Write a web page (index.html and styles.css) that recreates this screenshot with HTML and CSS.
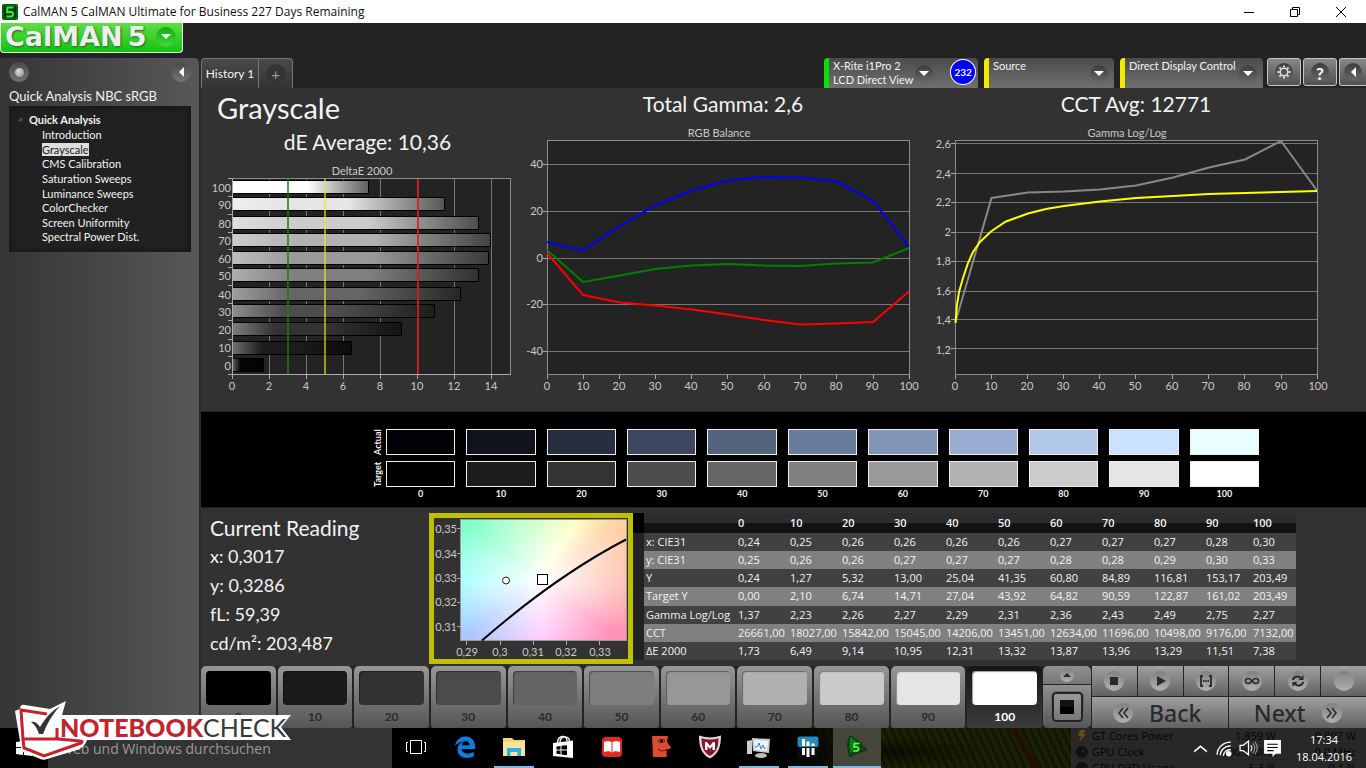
FILE: index.html
```html
<!DOCTYPE html>
<html lang="en">
<head>
<meta charset="utf-8">
<title>CalMAN 5 CalMAN Ultimate for Business 227 Days Remaining</title>
<link rel="stylesheet" href="styles.css">
</head>
<body>
<header class="titlebar">
  <svg class="app-icon" viewBox="0 0 16 16" aria-hidden="true"><rect width="16" height="16" rx="2" fill="#063a06"/><rect x="1" y="1" width="14" height="14" rx="2" fill="none" stroke="#0b8a12"/><path d="M11.5 3.5H5.5L5 8h4.5c2 0 2 4.500-.5 4.500H4.500" fill="none" stroke="#25f53a" stroke-width="2"/></svg>
  <span class="title">CalMAN 5 CalMAN Ultimate for Business 227 Days Remaining</span>
  <div class="win-buttons">
    <button aria-label="Minimize"><svg viewBox="0 0 12 12"><path d="M1 6.500h10"/></svg></button>
    <button aria-label="Restore"><svg viewBox="0 0 12 12"><path d="M1.500 3.500h7v7h-7zM3.500 3.500v-2h7v7h-2"/></svg></button>
    <button aria-label="Close"><svg viewBox="0 0 12 12"><path d="M1 1l10 10M11 1L1 11"/></svg></button>
  </div>
</header>

<div class="brandbar">
  <button class="brand"><span class="brand-name">CalMAN</span><span class="brand-num">5</span><span class="knob green"><i class="down"></i></span></button>
</div>

<div class="workspace">
  <aside class="sidebar">
    <div class="side-top">
      <button class="knob big" aria-label="Options"><i class="ball"></i></button>
      <button class="knob big" aria-label="Collapse"><i class="left"></i></button>
    </div>
    <h2 class="side-title">Quick Analysis NBC sRGB</h2>
    <nav class="tree">
      <div class="tree-root"><svg viewBox="0 0 6 6" aria-hidden="true"><path d="M5 0v5H0z" fill="#555"/></svg>Quick Analysis</div>
      <ul>
        <li><a href="#">Introduction</a></li>
        <li><a href="#" class="current">Grayscale</a></li>
        <li><a href="#">CMS Calibration</a></li>
        <li><a href="#">Saturation Sweeps</a></li>
        <li><a href="#">Luminance Sweeps</a></li>
        <li><a href="#">ColorChecker</a></li>
        <li><a href="#">Screen Uniformity</a></li>
        <li><a href="#">Spectral Power Dist.</a></li>
      </ul>
    </nav>
  </aside>

  <main class="main">
    <div class="toolbar">
      <div class="tabs">
        <button class="tab">History 1</button>
        <button class="tab add" aria-label="Add tab"><span>+</span></button>
      </div>
      <div class="devices">
        <button class="device meter"><span class="device-name">X-Rite i1Pro 2<br>LCD Direct View</span><span class="knob"><i class="down"></i></span><span class="count">232</span></button>
        <button class="device source"><span class="device-name">Source</span><span class="knob"><i class="down"></i></span></button>
        <button class="device display"><span class="device-name">Direct Display Control</span><span class="knob"><i class="down"></i></span></button>
        <div class="tools">
          <button class="tool" aria-label="Settings"><span class="knob"><svg viewBox="0 0 14 14" fill="none" stroke="#ddd"><circle cx="7" cy="7" r="3.800" stroke-width="1.600"/><path d="M7 .5v2M7 11.500v2M.5 7h2M11.500 7h2M2.400 2.400l1.500 1.500M10.100 10.100l1.500 1.500M2.400 11.600l1.500-1.500M10.100 3.900l1.500-1.500" stroke-width="2"/></svg></span></button>
          <button class="tool help" aria-label="Help"><span class="knob">?</span></button>
          <button class="tool cut" aria-label="Collapse panel"><span class="knob"><i class="left"></i></span></button>
        </div>
      </div>
    </div>

    <section class="charts">
      <div class="chart">
        <h1>Grayscale</h1>
        <h2>dE Average: 10,36</h2>
        <svg viewBox="201 161 324 250" role="img" aria-label="DeltaE 2000">
          <defs><linearGradient id="shade"><stop offset="0" stop-color="#fff" stop-opacity=".36"/><stop offset=".25" stop-color="#fff" stop-opacity="0"/><stop offset=".55" stop-color="#000" stop-opacity="0"/><stop offset="1" stop-color="#000" stop-opacity=".62"/></linearGradient></defs>
          <text x="362" y="175" class="mid">DeltaE 2000</text>
          <rect x="232.500" y="178.500" width="278" height="196" class="plot"/>
          <path class="grid" d="M269.500 179v195M306.500 179v195M343.500 179v195M380.500 179v195M417.500 179v195M454.500 179v195M491.500 179v195"/>
          <g stroke="#000">
            <path fill="#fff" d="M232.500 180.500h136v13h-136z"/><path fill="#e5e5e5" d="M232.500 197.500h212v13h-212z"/>
            <path fill="#ccc" d="M232.500 216.500h246v13h-246z"/><path fill="#b2b2b2" d="M232.500 233.500h258v13h-258z"/>
            <path fill="#999" d="M232.500 251.500h256v13h-256z"/><path fill="#808080" d="M232.500 268.500h246v13h-246z"/>
            <path fill="#666" d="M232.500 287.500h228v13h-228z"/><path fill="#4c4c4c" d="M232.500 304.500h202v13h-202z"/>
            <path fill="#333" d="M232.500 322.500h169v13h-169z"/><path fill="#1c1c1c" d="M232.500 341.500h119v13h-119z"/>
            <path fill="#050505" d="M232.500 358.500h31v13h-31z"/>
          </g>
          <g fill="url(#shade)">
            <path d="M233 181h135v12H233z"/><path d="M233 198h211v12H233z"/><path d="M233 217h245v12H233z"/><path d="M233 234h257v12H233z"/><path d="M233 252h255v12H233z"/><path d="M233 269h245v12H233z"/><path d="M233 288h227v12H233z"/><path d="M233 305h201v12H233z"/><path d="M233 323h168v12H233z"/><path d="M233 342h118v12H233z"/><path d="M233 359h30v12H233z"/>
          </g>
          <path class="frame" d="M232.500 178.500v196h278"/>
          <path class="tick" d="M228 178.500h4M228 196.500h4M228 214.500h4M228 232.500h4M228 249.500h4M228 267.500h4M228 285.500h4M228 303.500h4M228 320.500h4M228 339.500h4M228 356.500h4M228 374.500h4M232.500 375v4M269.500 375v4M306.500 375v4M343.500 375v4M380.500 375v4M417.500 375v4M454.500 375v4M491.500 375v4"/>
          <path d="M288 179v195" stroke="#1a7a1a" stroke-width="2" opacity=".75"/><path d="M325 179v195" stroke="#f0e820" stroke-width="2" opacity=".6"/><path d="M418 179v195" stroke="#e01818" stroke-width="2" opacity=".8"/>
          <g class="end"><text x="231" y="192">100</text><text x="231" y="209">90</text><text x="231" y="228">80</text><text x="231" y="245">70</text><text x="231" y="263">60</text><text x="231" y="280">50</text><text x="231" y="299">40</text><text x="231" y="316">30</text><text x="231" y="334">20</text><text x="231" y="352">10</text><text x="231" y="370">0</text></g>
          <g class="mid"><text x="232" y="390">0</text><text x="269" y="390">2</text><text x="306" y="390">4</text><text x="343" y="390">6</text><text x="380" y="390">8</text><text x="417" y="390">10</text><text x="454" y="390">12</text><text x="491" y="390">14</text></g>
        </svg>
      </div>
      <div class="chart">
        <h2>Total Gamma: 2,6</h2>
        <svg viewBox="525 123 400 288" role="img" aria-label="RGB Balance">
          <text x="719" y="137" class="mid">RGB Balance</text>
          <rect x="547.500" y="140.500" width="362" height="234" class="plot"/>
          <path class="grid" d="M547 164.500h362M547 211.500h362M547 258.500h362M547 304.500h362M547 351.500h362"/>
          <path class="tick" d="M543 164.500h4M543 211.500h4M543 258.500h4M543 304.500h4M543 351.500h4M547.500 375v4M583.500 375v4M619.500 375v4M655.500 375v4M691.500 375v4M727.500 375v4M764.500 375v4M800.500 375v4M836.500 375v4M873.500 375v4M909.500 375v4"/>
          <polyline class="line" stroke="#00f" points="547,242 583,250.500 620,226 655,205.500 692,190.500 728,180.500 764,177 800,177.500 837,181.500 873,200.500 909,247"/>
          <polyline class="line" stroke="#008000" points="547,250 583,282 620,275.500 655,269 692,265.500 728,264 764,265.500 800,266 837,263.500 873,262.500 909,248"/>
          <polyline class="line" stroke="#f00" points="547,253 583,295 620,302.500 655,305.500 692,309.500 728,314.500 764,320 800,324.500 837,323.500 873,322 909,291.500"/>
          <g class="end"><text x="543" y="168">40</text><text x="543" y="215">20</text><text x="543" y="262">0</text><text x="543" y="308">-20</text><text x="543" y="355">-40</text></g>
          <g class="mid"><text x="547" y="390">0</text><text x="583" y="390">10</text><text x="619" y="390">20</text><text x="655" y="390">30</text><text x="691" y="390">40</text><text x="727" y="390">50</text><text x="764" y="390">60</text><text x="800" y="390">70</text><text x="836" y="390">80</text><text x="872" y="390">90</text><text x="909" y="390">100</text></g>
        </svg>
      </div>
      <div class="chart">
        <h2>CCT Avg: 12771</h2>
        <svg viewBox="925 123 441 288" role="img" aria-label="Gamma Log/Log">
          <text x="1127" y="137" class="mid">Gamma Log/Log</text>
          <rect x="955.500" y="140.500" width="362" height="234" class="plot"/>
          <path class="grid" d="M955 143.500h362M955 173.500h362M955 202.500h362M955 232.500h362M955 261.500h362M955 291.500h362M955 319.500h362M955 348.500h362"/>
          <path class="tick" d="M951 143.500h4M951 173.500h4M951 202.500h4M951 232.500h4M951 261.500h4M951 291.500h4M951 319.500h4M951 348.500h4M955.500 375v4M991.500 375v4M1027.500 375v4M1063.500 375v4M1099.500 375v4M1135.500 375v4M1172.500 375v4M1208.500 375v4M1244.500 375v4M1281.500 375v4M1317.500 375v4"/>
          <polyline class="line" stroke="#888" points="955.500,322 991.500,198 1028,192.500 1064,191.500 1100,189.500 1136,185.500 1173,177.500 1209,167.500 1245,159.500 1281,141 1317,190.500"/>
          <polyline class="line" stroke="#ff0" points="955.500,323 957,305 959,292 963,278 968,263 973,252 980,242 991,231.500 1006,221.500 1028,213.500 1046,209 1064,206 1100,201.500 1136,198 1173,196 1209,194 1245,193 1281,192 1317,191"/>
          <g class="end"><text x="951" y="148">2,6</text><text x="951" y="178">2,4</text><text x="951" y="206">2,2</text><text x="951" y="236">2</text><text x="951" y="265">1,8</text><text x="951" y="295">1,6</text><text x="951" y="324">1,4</text><text x="951" y="354">1,2</text></g>
          <g class="mid"><text x="955" y="390">0</text><text x="991" y="390">10</text><text x="1027" y="390">20</text><text x="1063" y="390">30</text><text x="1099" y="390">40</text><text x="1135" y="390">50</text><text x="1172" y="390">60</text><text x="1208" y="390">70</text><text x="1244" y="390">80</text><text x="1281" y="390">90</text><text x="1318" y="390">100</text></g>
        </svg>
      </div>
    </section>

    <section class="swatches">
      <div class="swatch-names"><span>Actual</span><span>Target</span></div>
      <div class="swatch"><i style="background:#020208"></i><i style="background:#000"></i><b>0</b></div>
      <div class="swatch"><i style="background:#0e131d"></i><i style="background:#1c1c1c"></i><b>10</b></div>
      <div class="swatch"><i style="background:#262e3f"></i><i style="background:#333"></i><b>20</b></div>
      <div class="swatch"><i style="background:#3d4860"></i><i style="background:#4c4c4c"></i><b>30</b></div>
      <div class="swatch"><i style="background:#55647d"></i><i style="background:#666"></i><b>40</b></div>
      <div class="swatch"><i style="background:#6a7c9c"></i><i style="background:#808080"></i><b>50</b></div>
      <div class="swatch"><i style="background:#8095b7"></i><i style="background:#999"></i><b>60</b></div>
      <div class="swatch"><i style="background:#98add1"></i><i style="background:#b2b2b2"></i><b>70</b></div>
      <div class="swatch"><i style="background:#b1c7ea"></i><i style="background:#ccc"></i><b>80</b></div>
      <div class="swatch"><i style="background:#cae1ff"></i><i style="background:#e5e5e5"></i><b>90</b></div>
      <div class="swatch"><i style="background:#e9ffff"></i><i style="background:#fff"></i><b>100</b></div>
    </section>

    <section class="readings">
      <div class="current-reading">
        <h2>Current Reading</h2>
        <p>x: 0,3017</p><p>y: 0,3286</p><p>fL: 59,39</p><p>cd/m²: 203,487</p>
      </div>
      <svg class="cie" viewBox="434 518 194 141" role="img" aria-label="CIE chromaticity">
        <rect x="460.500" y="519.500" width="166" height="121" fill="none" stroke="#999"/>
        <path d="M482 640.500Q556 576 626 539.500" fill="none" stroke="#000" stroke-width="2"/>
        <circle cx="506" cy="580.500" r="3.500" fill="#fff" stroke="#222"/><rect x="537.500" y="574.500" width="10" height="10" fill="#fff" stroke="#000"/>
        <path class="tick" d="M457 528.500h3M457 553.500h3M457 578.500h3M457 602.500h3M457 626.500h3M466.500 641v4M500.500 641v4M533.500 641v4M566.500 641v4M599.500 641v4"/>
        <g class="end"><text x="457" y="533">0,35</text><text x="457" y="558">0,34</text><text x="457" y="582">0,33</text><text x="457" y="606">0,32</text><text x="457" y="631">0,31</text></g>
        <g class="mid"><text x="467" y="656">0,29</text><text x="500" y="656">0,3</text><text x="533" y="656">0,31</text><text x="566" y="656">0,32</text><text x="600" y="656">0,33</text></g>
      </svg>
      <table class="data">
        <thead><tr><td class="grip"></td><td></td><th>0</th><th>10</th><th>20</th><th>30</th><th>40</th><th>50</th><th>60</th><th>70</th><th>80</th><th>90</th><th>100</th></tr></thead>
        <tbody>
        <tr><td class="grip"></td><th>x: CIE31</th><td>0,24</td><td>0,25</td><td>0,26</td><td>0,26</td><td>0,26</td><td>0,26</td><td>0,27</td><td>0,27</td><td>0,27</td><td>0,28</td><td>0,30</td></tr>
        <tr><td class="grip"></td><th>y: CIE31</th><td>0,25</td><td>0,26</td><td>0,26</td><td>0,27</td><td>0,27</td><td>0,27</td><td>0,28</td><td>0,28</td><td>0,29</td><td>0,30</td><td>0,33</td></tr>
        <tr><td class="grip"></td><th>Y</th><td>0,24</td><td>1,27</td><td>5,32</td><td>13,00</td><td>25,04</td><td>41,35</td><td>60,80</td><td>84,89</td><td>116,81</td><td>153,17</td><td>203,49</td></tr>
        <tr><td class="grip"></td><th>Target Y</th><td>0,00</td><td>2,10</td><td>6,74</td><td>14,71</td><td>27,04</td><td>43,92</td><td>64,82</td><td>90,59</td><td>122,87</td><td>161,02</td><td>203,49</td></tr>
        <tr><td class="grip"></td><th>Gamma Log/Log</th><td>1,37</td><td>2,23</td><td>2,26</td><td>2,27</td><td>2,29</td><td>2,31</td><td>2,36</td><td>2,43</td><td>2,49</td><td>2,75</td><td>2,27</td></tr>
        <tr><td class="grip"></td><th>CCT</th><td>26661,00</td><td>18027,00</td><td>15842,00</td><td>15045,00</td><td>14206,00</td><td>13451,00</td><td>12634,00</td><td>11696,00</td><td>10498,00</td><td>9176,00</td><td>7132,00</td></tr>
        <tr><td class="grip"></td><th>ΔE 2000</th><td>1,73</td><td>6,49</td><td>9,14</td><td>10,95</td><td>12,31</td><td>13,32</td><td>13,87</td><td>13,96</td><td>13,29</td><td>11,51</td><td>7,38</td></tr>
        </tbody>
      </table>
    </section>

    <section class="controls">
      <div class="levels">
        <button><i style="background:#000"></i>0</button>
        <button><i style="background:#1b1b1b"></i>10</button>
        <button><i style="background:#323232"></i>20</button>
        <button><i style="background:#4b4b4b"></i>30</button>
        <button><i style="background:#646464"></i>40</button>
        <button><i style="background:#7e7e7e"></i>50</button>
        <button><i style="background:#979797"></i>60</button>
        <button><i style="background:#b0b0b0"></i>70</button>
        <button><i style="background:#cacaca"></i>80</button>
        <button><i style="background:#e5e5e5"></i>90</button>
        <button class="selected"><i style="background:#fff"></i>100</button>
      </div>
      <div class="pattern">
        <button class="up" aria-label="Show patterns"><span class="knob pale"><svg viewBox="0 0 10 10"><path d="M1 7l4-4 4 4z" fill="#2a2a2a"/></svg></span></button>
        <button class="window" aria-label="Pattern window"><i></i></button>
      </div>
      <div class="transport">
        <button aria-label="Stop"><span class="knob pale"><svg viewBox="0 0 16 16"><path d="M4 4h8v8H4z" fill="#2a2a2a"/></svg></span></button>
        <button aria-label="Play"><span class="knob pale"><svg viewBox="0 0 16 16"><path d="M5 3l9 5-9 5z" fill="#2a2a2a"/></svg></span></button>
        <button aria-label="Read series"><span class="knob pale"><svg viewBox="0 0 16 16" fill="none" stroke="#2a2a2a" stroke-width="1.800"><path d="M5 3H3v10h2M11 3h2v10h-2M5 8h1.500M7.300 8h1.400M9.500 8H11"/></svg></span></button>
        <button aria-label="Read continuously"><span class="knob pale"><svg viewBox="0 0 16 16" fill="none" stroke="#2a2a2a" stroke-width="1.600"><path d="M8 8C6 5 1.500 4.500 1.500 8S6 11 8 8s6.500-3.500 6.500 0S10 11 8 8z"/></svg></span></button>
        <button aria-label="Refresh"><span class="knob pale"><svg viewBox="0 0 16 16" fill="none" stroke="#2a2a2a" stroke-width="2"><path d="M3 7c0-3 5-5 8-2M13 9c0 3-5 5-8 2"/><path d="M13.500 2v5h-5zM2.500 14V9h5z" fill="#2a2a2a" stroke="none"/></svg></span></button>
        <button aria-label="Record"><span class="knob pale"></span></button>
        <button class="nav-btn"><span class="knob pale"><svg viewBox="0 0 16 16" fill="none" stroke="#2a2a2a" stroke-width="1.500"><path d="M8 3L4 8l4 5M13 3L9 8l4 5"/></svg></span>Back</button>
        <button class="nav-btn next">Next<span class="knob pale"><svg viewBox="0 0 16 16" fill="none" stroke="#2a2a2a" stroke-width="1.500"><path d="M3 3l4 5-4 5M8 3l4 5-4 5"/></svg></span></button>
      </div>
    </section>
  </main>
</div>

<footer class="taskbar">
  <div class="wallpaper"></div>
  <div class="sensor">
    <div><svg viewBox="0 0 12 12"><path d="M4 0h6L7 4h3L3 12l2-6H2z" fill="#6b4a10"/></svg><span>GT Cores Power</span><span>1.859 W</span><span>0.897 W</span></div>
    <div><svg viewBox="0 0 12 12"><circle cx="6" cy="6" r="6" fill="#111"/><path d="M6 6l3-3" stroke="#533"/></svg><span>GPU Clock</span><span>300.0 MHz</span><span>0.0 MHz</span></div>
    <div><svg viewBox="0 0 12 12"><circle cx="6" cy="6" r="6" fill="#111"/></svg><span>GPU D3D Usage</span><span>5.3 %</span><span>0.1 %</span></div>
  </div>
  <button class="start" aria-label="Start"><svg viewBox="0 0 16 16"><path d="M0 2l7-1v6H0zM8 1l8-1v7H8zM0 8h7v7l-7-1zM8 8h8v8l-8-1z" fill="#fff"/></svg></button>
  <input class="search" type="text" aria-label="Search" placeholder="Web und Windows durchsuchen">
  <nav class="apps">
    <button aria-label="Task view"><svg viewBox="0 0 24 24" fill="none" stroke="#fff"><path d="M6.500 5.500h11v13h-11zM4 7.500H2.500v9H4M20 7.500h1.500v9H20"/></svg></button>
    <button aria-label="Edge"><svg viewBox="0 0 24 24"><path d="M2 11C3 4.500 7.500 1.500 12.500 1.500c6 0 9.500 4.500 9.500 9.500v3H8.500c.3 3 3 4.500 6.500 4.500 2.300 0 4.200-.6 5.800-1.500v4.200c-2 1-4.300 1.600-7 1.600C8 22.800 4.500 19 4.500 14.700c0-4 2.500-7 6-8.200C6.500 7 4 8.500 2 11zM8.700 10.300h7.800c0-2.500-1.300-4.300-3.800-4.300-2.200 0-3.700 1.800-4 4.300z" fill="#0b7fe0"/></svg></button>
    <button class="running" aria-label="Explorer"><svg viewBox="0 0 24 24"><path d="M1 3h9l2 2h11v16H1z" fill="#f7d271"/><path d="M1 7h22v14H1z" fill="#fbe399"/><path d="M5 13h14v8h-3.500v-4h-7v4H5z" fill="#22b4ea"/></svg></button>
    <button aria-label="Store"><svg viewBox="0 0 24 24"><path d="M2 8l20-2.500V23L2 21z" fill="#fff"/><path d="M6.500 8c0-8 9.500-8.500 9.500-2M9 7.500c0-7 9-7.500 9.500-1.500" fill="none" stroke="#fff" stroke-width="1.400"/><path d="M5.500 11.500l4-.5v3.500h-4zM10.500 10.800l5.500-.6v4.300h-5.500zM5.500 15.500h4v3.700l-4-.5zM10.500 15.500H16v4.700l-5.500-.7z" fill="#000"/></svg></button>
    <button aria-label="Reader"><svg viewBox="0 0 24 24"><rect x="2" y="2" width="20" height="20" rx="4" fill="#de2a23"/><path d="M4 7c3-1.200 6-1 8 .5 2-1.500 5-1.700 8-.5v10c-3-1-6-1-8 .5-2-1.500-5-1.500-8-.5z" fill="#fff"/><path d="M12 7.500V17" stroke="#de2a23"/></svg></button>
    <button aria-label="Face"><svg viewBox="0 0 24 24"><path d="M3 1h16l-1 6 4.500 6-4.500 1.500V22H4z" fill="#e1482f"/><path d="M9 6c2-2 5-2 7 0-2 2-5 2-7 0z" fill="#a78" stroke="#222"/><circle cx="12.500" cy="6" r="1.500" fill="#111"/><path d="M9 14c3 2.500 6 2 9 .5M18 15v7" fill="none" stroke="#40100a"/></svg></button>
    <button aria-label="McAfee"><svg viewBox="0 0 24 24"><path d="M12 2.500q5 0 11-2c0 10-2 18-11 23C3 19 1 11 1 .5q6 2 11 2z" fill="#ddd"/><path d="M12 4.500q4 0 8.500-1.300c0 8-1.500 13.500-8.500 17.800C5 17 3.500 11.500 3.500 3.200Q8 4.500 12 4.500z" fill="#8c1528"/><path d="M7 15V7h2l3 4 3-4h2v8h-2.500v-4L12 14l-2.500-3v4z" fill="#fff"/></svg></button>
    <button class="running" aria-label="Monitor"><svg viewBox="0 0 24 24"><path d="M0 6l5-1v14H0zM5 3l18 1-1 14-16-2z" fill="#ccc"/><path d="M7 5l14 1-1 10-12-1.500z" fill="#eaf4ff"/><path d="M8 12h2l2-4 2 6 2-4 1 3h2" fill="none" stroke="#3184c9"/><ellipse cx="14" cy="20.500" rx="6" ry="2.500" fill="#bbb"/></svg></button>
    <button class="running" aria-label="Hardware info"><svg viewBox="0 0 24 24"><rect x="1.500" y="1.500" width="21" height="10.500" rx="2" fill="#2688bd"/><path d="M1.500 12h21v9q0 2-2 2h-17q-2 0-2-2z" fill="#090d10"/><path d="M7.500 4v7M7.500 13v7M12 6.500v4.500M12 13v9M17 8.500V11M17 13v7" stroke="#fff" stroke-width="3"/></svg></button>
    <button class="running active" aria-label="CalMAN"><svg viewBox="0 0 24 24"><path d="M5 1c5 2 13 9 17 14-6 1-12 4-17 7C2 14 2 6 5 1z" fill="#0a4a0c" stroke="#0b2f0b"/><path d="M5 2c3 1 7 5 9 7l-9 9z" fill="#0d7d12"/><path d="M14.500 8.500H9.500L9 12h3c2.500 0 2 4-1 4H8" fill="none" stroke="#5dff4c" stroke-width="1.700"/></svg></button>
  </nav>
  <div class="tray">
    <svg viewBox="0 0 18 18" fill="none" stroke="#fff" stroke-width="1.500"><path d="M3 12l6-5 6 5"/></svg>
    <svg viewBox="0 0 18 18" fill="none" stroke="#fff" stroke-width="1.300"><path d="M2 15C2 8 8 3 15 3M5 15.500c0-5 4-9 10-9M8 16c0-3.500 3-6 7-6"/><circle cx="13" cy="14" r="2" fill="#fff"/></svg>
    <svg viewBox="0 0 18 18" fill="none" stroke="#fff" stroke-width="1.200"><path d="M1 6h3l5-4v13l-5-4H1zM11 6c1.500 1.500 1.500 4 0 5.500"/><path d="M13 4c2.500 3 2.500 6.500 0 9.500M15 2.500c3 4 3 8 0 12" stroke="#888"/></svg>
    <svg viewBox="0 0 18 18"><path d="M1 1h16v13h-5l-3 3v-3H1z" fill="#fff"/><path d="M4 5h10M4 8h10M4 11h6" stroke="#000"/></svg>
  </div>
  <div class="clock"><span>17:34</span><span>18.04.2016</span></div>

  <div class="watermark">
    <svg viewBox="0 0 278 62" aria-hidden="true">
      <path d="M5 8Q5 3 10 4L35 8 51 0 47 14H276L266 26 276 39H72Q70 46 62 49L32 58Q28 60 23 57L8 51Q6 49 6 46L0 10z" fill="#fff"/>
      <path d="M42 27V38H8L6 9l26 4" fill="none" stroke="#c9202a" stroke-width="3"/>
      <path d="M8 38l1 9 20 8 37-13c2-1 1-2-1-2l-22-2" fill="none" stroke="#c9202a" stroke-width="3"/>
      <path d="M16 21q5-1 9 5Q33 12 45 5 34 17 28 33h-4Q21 24 16 21z" fill="#333"/>
    </svg>
    <div class="watermark-text"><b>NOTEBOOK</b><span>CHECK</span></div>
  </div>
</footer>
</body>
</html>
```
FILE: styles.css
```css
* { box-sizing: border-box; }
html, body { height: 100%; }
body { margin: 0; display: flex; flex-direction: column; min-height: 100vh; overflow: hidden; background: #232323; color: #f2f2f2; font-family: Lato, "Open Sans", sans-serif; font-size: 13px; }
button { margin: 0; padding: 0; border: 0; background: none; color: inherit; font: inherit; }
h1, h2, p, ul { margin: 0; padding: 0; font-weight: normal; }
ul { list-style: none; }
a { color: inherit; text-decoration: none; }
svg { display: block; }

.titlebar { flex: none; display: flex; align-items: center; height: 23px; padding-left: 2px; background: #fff; color: #111; font-family: "Open Sans", sans-serif; font-size: 12px; }
.app-icon { width: 16px; height: 16px; margin-right: 5px; }
.title { flex: 1; }
.win-buttons { display: flex; margin-right: 2px; }
.win-buttons button { width: 46px; height: 22px; display: grid; place-items: center; }
.win-buttons svg { width: 12px; height: 12px; fill: none; stroke: #000; }

.brandbar { flex: none; height: 35px; }
.brand { display: flex; align-items: center; width: 183px; height: 30px; padding: 0 6px 2px 4px; border: 1px solid #e4f8e0; border-top: 0; border-radius: 0 0 4px 4px; background: linear-gradient(#62dc45, #12c312); font: bold 27px/27px "DejaVu Sans", sans-serif; color: #eee; text-shadow: 1px 1px 2px #27632a; }
.brand-num { flex: 1; margin-left: 5px; text-align: left; }

.knob { flex: none; display: grid; place-items: center; width: 18px; height: 18px; border-radius: 50%; background: linear-gradient(#3c3c3c, #686868); }
.knob.big { width: 20px; height: 20px; background: linear-gradient(#4a4a4a, #737373); }
.knob.green { width: 20px; height: 20px; background: linear-gradient(#0fae12, #44d83f); }
.knob.pale { width: 20px; height: 20px; background: linear-gradient(#808080, #b0b0b0); }
.down { border: 5px solid transparent; border-top-color: #fff; border-bottom: 0; }
.left { border: 5px solid transparent; border-right-color: #fff; border-left: 0; }
.ball { width: 9px; height: 9px; border-radius: 50%; background: radial-gradient(circle at 40% 35%, #ddd, #8a8a8a); }

.workspace { flex: 1; display: flex; min-height: 0; }
.sidebar { flex: none; width: 201px; padding: 4px 8px 0 9px; border-right: 2px solid #2b2b2b; border-radius: 0 6px 0 0; background: linear-gradient(90deg, #353535, #585858); }
.side-top { display: flex; justify-content: space-between; }
.side-title { height: 24px; font-size: 13px; line-height: 28px; }
.tree { height: 146px; padding: 5px 0 7px 9px; background: #212121; border-top: 1px solid #191919; box-shadow: inset 0 0 6px #111; }
.tree-root { display: flex; align-items: center; gap: 6px; height: 14px; font-size: 11px; font-weight: bold; }
.tree-root svg { width: 5px; height: 5px; }
.tree ul { display: grid; grid-auto-rows: 1fr; height: 117px; margin-top: 2px; padding-left: 24px; font-size: 11px; line-height: 14px; }
.tree a.current { background: #ddd; color: #222; }

.main { flex: 1; min-width: 0; display: flex; flex-direction: column; background: #323232; }
.toolbar { flex: none; display: flex; justify-content: space-between; height: 30px; background: #232323; }
.tabs { display: flex; }
.tab { width: 58px; border: solid #777; border-width: 1px 1px 0 1px; border-radius: 4px 0 0 0; background: linear-gradient(#4a4a4a, #333); font-size: 12px; white-space: nowrap; }
.tab.add { width: 34px; border-left: 0; border-radius: 0 4px 0 0; color: #999; }
.add span { display: grid; place-items: center; width: 20px; height: 20px; margin: 0 auto; border-radius: 50%; background: #343434; font-size: 15px; }
.devices { display: flex; gap: 6px; }
.device { display: flex; align-items: flex-start; gap: 2px; border-left: 5px solid #f2ea00; border-radius: 4px 4px 0 0; background: linear-gradient(#4b4b4b, #6f6f6f); padding: 1px 6px 0 4px; text-align: left; font-size: 11px; line-height: 14px; }
.device-name { flex: 1; white-space: nowrap; }
.device .knob { align-self: center; }
.device.meter { width: 154px; border-left-color: #0cdd0c; padding-right: 2px; }
.device.source { width: 130px; }
.device.display { width: 143px; }
.count { display: grid; place-items: center; width: 26px; height: 26px; margin-left: 15px; border: 1px solid #fff; border-radius: 50%; background: #00f; font-size: 10px; font-weight: bold; }
.tools { display: flex; gap: 2px; margin-left: -2px; }
.tool { display: grid; place-items: center; width: 34px; height: 28px; border: 1px solid #c4c4c4; border-radius: 3px; background: linear-gradient(#888, #505050); }
.tool svg { width: 14px; height: 14px; }
.help { font-size: 17px; font-weight: 900; }
.cut { width: 27px; border-right: 0; border-radius: 3px 0 0 3px; }

.charts { flex: none; display: grid; grid-template-columns: 324fr 400fr 441fr; }
.chart { display: flex; flex-direction: column; justify-content: flex-end; }
.chart svg { width: 100%; height: auto; }
.chart h1 { padding: 0 0 0 16px; font-size: 29px; line-height: 38px; }
.chart h2 { font-size: 21px; line-height: 29px; text-align: center; padding: 0 0 5px 9px; }
.chart h2:first-child { line-height: 32px; padding: 0 19px 3px 0; }
.chart:nth-child(2) h2:first-child { padding-right: 4px; }
svg text, svg .mid, svg .end { fill: #c9c9c9; font-family: Lato, sans-serif; font-size: 11px; }
.mid { text-anchor: middle; }
.end { text-anchor: end; }
.plot { fill: #232323; stroke: #8c8c8c; }
.grid { stroke: #777; fill: none; }
.frame, .tick { stroke: #aaa; fill: none; }
.line { fill: none; stroke-width: 2; }

.swatches { flex: none; display: grid; grid-template-columns: 15px repeat(11, 1fr); height: 96px; padding: 17px 96px 0 170px; border-top: 1px solid #222; background: #000; }
.swatch-names { display: grid; grid-template-rows: 26px 26px; gap: 6px; font-size: 9px; line-height: 14px; font-weight: bold; }
.swatch-names span { writing-mode: vertical-rl; transform: rotate(180deg); text-align: center; white-space: nowrap; }
.swatch { display: grid; grid-template-rows: 26px 26px 14px; row-gap: 6px; padding-right: 11px; }
.swatch i { border: 1px solid #eee; }
.swatch b { margin-top: -6px; text-align: center; font-size: 9px; line-height: 14px; }

.readings { flex: 1; display: flex; align-items: flex-start; padding-top: 5px; border-top: 1px solid #1f1f1f; min-height: 0; }
.current-reading { width: 228px; padding-left: 9px; font-size: 18px; line-height: 29px; }
.current-reading h2 { font-size: 21px; line-height: 29px; }
.cie { width: 204px; height: 151px; border: 5px solid #c0c000; background: radial-gradient(ellipse at 48% 50%, #fff 0, #fff8 40%, #fff0 85%) 26px 1px / 167px 122px no-repeat, conic-gradient(from 0deg at 48% 50%, #d0ffc0, #ffffc0 32deg, #ffd4a8 52deg, #ffb8a8 90deg, #ff90b8 126deg, #ffc0ff 180deg, #a8c8ff 234deg, #90ffff 270deg, #80ffc8 308deg, #d0ffc0) 26px 1px / 167px 122px no-repeat, #323232; }
.data { width: 663px; height: 147px; border-collapse: collapse; table-layout: fixed; font: 11px/14px "Open Sans", sans-serif; white-space: nowrap; }
.data td, .data th { width: 52px; padding: 0 0 0 2px; text-align: left; font-weight: normal; }
.data .grip { width: 11px; background: #222; }
.data tr > :nth-child(2) { width: 92px; }
.data tr > :nth-child(12) { width: 47px; }
.data tr > :last-child { width: 45px; }
.data thead tr { height: 20px; background: linear-gradient(#2c2c2c 50%, #121212 50%); }
.data thead th { font-weight: 600; }
.data thead .grip { background: #000; }
.data tbody tr { background: #414141; }
.data tbody tr:nth-child(even) { background: #808080; }

.controls { flex: none; display: flex; gap: 1px; height: 62px; background: #242424; }
.levels { flex: 841; display: flex; gap: 2px; color: #2b2b2b; font-size: 12px; font-weight: bold; }
.levels button { flex: 1; display: flex; flex-direction: column; align-items: center; padding: 5px 5px 0; border-radius: 5px 5px 3px 3px; background: linear-gradient(#979797, #555); line-height: 23px; }
.levels i { width: 100%; height: 36px; border-radius: 4px; box-shadow: inset 1px 1px 1px #0006; }
.levels .selected { background: linear-gradient(#161616, #3c3c3c); color: #fff; }
.pattern { flex: 48; display: flex; flex-direction: column; gap: 1px; }
.pattern button { display: grid; place-items: center; background: linear-gradient(#909090, #777); border-radius: 5px 5px 0 0; }
.pattern .up { height: 18px; }
.pattern .up .knob { width: 14px; height: 14px; }
.pattern .up svg { width: 10px; height: 10px; }
.pattern .window { flex: 1; border-radius: 0 0 5px 5px; background: linear-gradient(#909090, #555); }
.window i { width: 31px; height: 30px; border: 2px solid #222; border-radius: 4px; outline: 1px solid #666; background: linear-gradient(#111 50%, #000 50%) center / 14px 14px no-repeat, linear-gradient(#999, #777); }
.transport { flex: 274; display: grid; grid-template: 30px 31px / repeat(6, 1fr); gap: 1px; color: #2a2a2a; }
.transport button { display: flex; align-items: center; justify-content: center; background: linear-gradient(#a0a0a0, #616161); }
.transport svg { width: 16px; height: 16px; }
.transport .nav-btn { grid-column: span 3; gap: 16px; padding-right: 6px; font: 500 23px/28px "Noto Sans", sans-serif; }
.transport .next { padding-right: 0; }

.taskbar { flex: none; position: relative; display: flex; height: 40px; background: #000; font-family: "Open Sans", sans-serif; color: #fff; }
.wallpaper { position: absolute; inset: 0 295px 0 780px; background: linear-gradient(90deg, #000, #0000 35%), linear-gradient(60deg, #0000 80%, #200d04 81%, #200d04 82%, #0000 83%), radial-gradient(ellipse at 35% 60%, #0008, #0000 40%), repeating-linear-gradient(65deg, #1c2005 0 3px, #131602 4px 7px); }
.sensor { position: absolute; inset: 0 0 0 auto; width: 295px; overflow: hidden; background: #282828; color: #050505; font-size: 11px; line-height: 17px; padding: 0 10px 0 5px; }
.sensor div { display: grid; grid-template-columns: 16px 105px 1fr 80px; border-bottom: 1px solid #242424; height: 17px; margin-top: -1px; text-align: right; }
.sensor svg { width: 12px; height: 12px; margin-top: 3px; }
.sensor span:nth-child(2) { text-align: left; }
.start { width: 48px; display: grid; place-items: center; }
.start svg { width: 16px; height: 16px; }
.search { width: 344px; margin: 0; padding: 0 0 0 12px; border: 0; border-radius: 0; background: #333; color: #fff; font: 14px "Open Sans", sans-serif; }
.search::placeholder { color: #999; opacity: 1; }
.apps { display: flex; gap: 1px; position: relative; }
.apps button { width: 48px; display: grid; place-items: center; border-bottom: 2px solid transparent; }
.apps svg { width: 24px; height: 24px; }
.apps .running { background: linear-gradient(#76b9ed, #76b9ed) center 38px / 40px 2px no-repeat border-box; }
.apps .active { background: linear-gradient(#76b9ed, #76b9ed) center 38px / 48px 2px no-repeat border-box, #45463a; }
.tray { position: relative; display: flex; align-items: center; gap: 5px; margin-left: auto; }
.tray svg { width: 19px; height: 19px; }
.clock { position: relative; display: flex; flex-direction: column; align-items: center; justify-content: center; width: 84px; font-size: 11px; line-height: 17px; }
.watermark { position: absolute; left: 15px; bottom: 5px; width: 278px; }
.watermark-text { position: absolute; left: 45px; top: 14px; font: 25px/25px Lato, sans-serif; color: #3a3a3a; }
.watermark-text b { font-weight: 900; color: #c2242c; }
```
